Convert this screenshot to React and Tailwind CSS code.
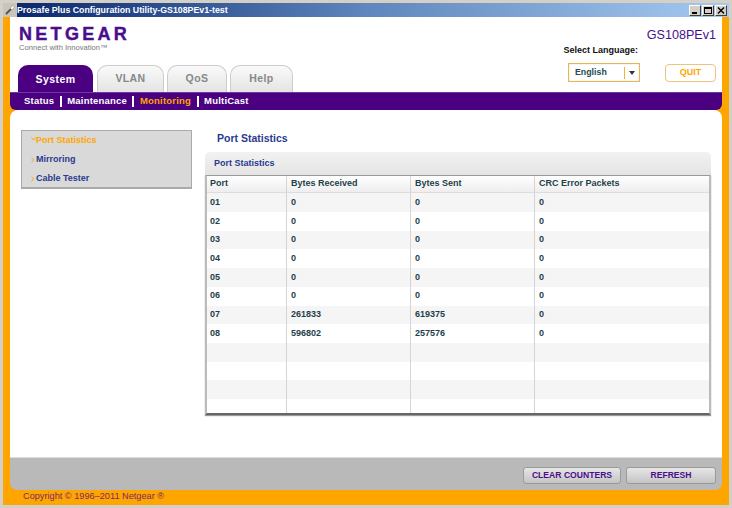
import React from "react";

const tabs = [
  { label: "VLAN", width: "w-[67px]" },
  { label: "QoS", width: "w-[60px]" },
  { label: "Help", width: "w-[63px]" },
];

const rows = [
  ["01", "0", "0", "0"],
  ["02", "0", "0", "0"],
  ["03", "0", "0", "0"],
  ["04", "0", "0", "0"],
  ["05", "0", "0", "0"],
  ["06", "0", "0", "0"],
  ["07", "261833", "619375", "0"],
  ["08", "596802", "257576", "0"],
  ["", "", "", ""],
  ["", "", "", ""],
  ["", "", "", ""],
];

const WinButton = ({ children }) => (
  <div className="w-[12px] h-[11px] flex items-center justify-center bg-[#d4d0c8] border border-t-white border-l-white border-r-[#404040] border-b-[#404040]">
    {children}
  </div>
);

const Chevron = () => (
  <svg width="4" height="6" viewBox="0 0 4 6" className="mr-[1px] shrink-0">
    <path d="M0.5 0.8 L2.8 3 L0.5 5.2" fill="none" stroke="#ffa500" strokeWidth="1" />
  </svg>
);

const TitleBar = () => (
  <div className="h-[14px] flex items-center bg-gradient-to-r from-[#0a246a] via-[#5f86bd] to-[#a6caf0] pr-[2px]">
    <div className="w-[14px] h-[14px] bg-[#c9c5bc] flex items-center justify-center">
      <svg width="12" height="12" viewBox="0 0 12 12">
        <path d="M2 10 L7 5" stroke="#555" strokeWidth="2" />
        <path d="M6 4 L9 1.5 L10.5 3 L8 6 Z" fill="#fff" stroke="#777" strokeWidth="0.5" />
      </svg>
    </div>
    <span className="text-[8.8px] font-bold text-white leading-none">
      Prosafe Plus Configuration Utility-GS108PEv1-test
    </span>
    <div className="ml-auto flex gap-[1px]">
      <WinButton>
        <div className="w-[5px] h-[2px] bg-black mt-[5px] mr-[2px]" />
      </WinButton>
      <WinButton>
        <div className="w-[8px] h-[7px] border border-black border-t-2" />
      </WinButton>
      <WinButton>
        <svg width="8" height="7" viewBox="0 0 8 7">
          <path d="M1 0.5 L7 6.5 M7 0.5 L1 6.5" stroke="#000" strokeWidth="1.4" />
        </svg>
      </WinButton>
    </div>
  </div>
);

const Header = () => (
  <div className="h-[75px] bg-white flex justify-between">
    <div className="flex flex-col pl-[8px]">
      <div className="mt-[7px] ml-[1px] text-[#4a0e8c] text-[18px] leading-[20px] font-bold tracking-[3.3px] [-webkit-text-stroke:0.4px_#4a0e8c]">
        NETGEAR
      </div>
      <div className="ml-[1px] text-[7.6px] leading-[8px] text-[#777]">Connect with Innovation™</div>
      <div className="flex mt-[13px] h-[27px] items-end">
        <div className="w-[75px] h-[27px] pt-[3px] rounded-t-[10px] bg-[#4b0082] text-white text-[10.5px] font-bold tracking-[0.4px] flex items-center justify-center">
          System
        </div>
        <div className="flex gap-[3px] ml-[4px]">
          {tabs.map((tab) => (
            <div
              key={tab.label}
              className={`${tab.width} h-[27px] rounded-t-[10px] border border-b-0 border-[#ccc] bg-gradient-to-b from-[#fafafa] to-[#e4e4e4] text-[#888] text-[10.5px] font-bold tracking-[0.4px] flex items-center justify-center`}
            >
              {tab.label}
            </div>
          ))}
        </div>
      </div>
    </div>
    <div className="flex flex-col items-end pr-[6px]">
      <div className="mt-[11px] text-[12.6px] leading-[15px] text-[#4a0e8c]">GS108PEv1</div>
      <div className="mt-[1px] mr-[78px] text-[9px] leading-[12px] font-bold text-[#111]">
        Select Language:
      </div>
      <div className="flex mt-[7px] items-center">
        <div className="w-[72px] h-[19px] border border-[#e8b65a] flex items-center shadow-[inset_0_0_1px_#c9a15a]">
          <span className="ml-[6px] text-[8.8px] font-bold text-[#234a55]">English</span>
          <div className="ml-auto w-[15px] h-[12px] border-l border-[#f5b03e] flex items-center justify-center">
            <div className="w-0 h-0 border-x-[3px] border-x-transparent border-t-[4px] border-t-[#333]" />
          </div>
        </div>
        <div className="ml-[25px] w-[51px] h-[18px] rounded-[4px] border border-[#edc47e] bg-white text-[#ffa500] text-[9px] font-bold flex items-center justify-center">
          QUIT
        </div>
      </div>
    </div>
  </div>
);

const SubNav = () => (
  <div className="h-[18px] bg-[#4b0082] rounded-b-[6px] border-t border-[#6a3a9f] flex items-center pl-[14px] text-[9.5px] font-bold tracking-[0.2px] text-white">
    <span>Status</span>
    <span className="w-[2px] h-[11px] bg-white mx-[5.5px]" />
    <span>Maintenance</span>
    <span className="w-[2px] h-[11px] bg-white mx-[5.5px]" />
    <span className="text-[#ffa500]">Monitoring</span>
    <span className="w-[2px] h-[11px] bg-white mx-[5.5px]" />
    <span>MultiCast</span>
  </div>
);

const SideMenu = () => (
  <div className="w-[171px] h-[59px] bg-[#d9d9d9] border border-[#aaa] border-b-2 flex flex-col text-[9px] font-bold text-[#2a3a8f]">
    <div className="h-[19px] shrink-0 flex items-center pl-[9px] text-[#ffa500]">
      <svg width="5" height="4" viewBox="0 0 5 4" className="-mt-[4px] shrink-0">
        <path d="M0.5 0.5 L2.5 3 L4.5 0.5" fill="none" stroke="#ffa500" strokeWidth="1" />
      </svg>
      <span>Port Statistics</span>
    </div>
    <div className="h-[19px] shrink-0 flex items-center pl-[9px]">
      <Chevron />
      <span>Mirroring</span>
    </div>
    <div className="h-[19px] shrink-0 flex items-center pl-[9px]">
      <Chevron />
      <span>Cable Tester</span>
    </div>
  </div>
);

const StatsTable = () => (
  <div className="w-[506px]">
    <div className="h-[23px] pl-[9px] flex items-center bg-gradient-to-b from-[#f2f2f2] to-[#e4e4e4] rounded-t-[5px] text-[9px] font-bold text-[#2a3a8f]">
      Port Statistics
    </div>
    <div className="border-l-2 border-r-2 border-[#bbb] border-t border-t-[#999] border-b-2 border-b-[#666] shadow-[0_1px_1px_#999]">
      <div className="grid grid-cols-[80px_124px_124px_1fr] h-[17.4px] items-stretch bg-gradient-to-b from-white to-[#eee] border-b border-[#ddd] text-[9px] font-bold text-[#1f3f4a]">
        <div className="pl-[3px] flex items-center border-r border-[#d5d5d5]">Port</div>
        <div className="pl-[4px] flex items-center border-r border-[#d5d5d5]">Bytes Received</div>
        <div className="pl-[4px] flex items-center border-r border-[#d5d5d5]">Bytes Sent</div>
        <div className="pl-[4px] flex items-center">CRC Error Packets</div>
      </div>
      {rows.map((row, i) => (
        <div
          key={i}
          className={`grid grid-cols-[80px_124px_124px_1fr] h-[18.7px] text-[9px] font-bold text-[#1f3f4a] ${
            i % 2 === 0 ? "bg-[#f5f5f5]" : "bg-white"
          }`}
        >
          {row.map((cell, j) => (
            <div
              key={j}
              className={`${j === 0 ? "pl-[3px]" : "pl-[4px]"} flex items-center ${j < 3 ? "border-r border-[#d5d5d5]" : ""}`}
            >
              {cell}
            </div>
          ))}
        </div>
      ))}
      <div className="grid grid-cols-[80px_124px_124px_1fr] h-[13.6px] bg-white">
        <div className="border-r border-[#d5d5d5]" />
        <div className="border-r border-[#d5d5d5]" />
        <div className="border-r border-[#d5d5d5]" />
        <div />
      </div>
    </div>
  </div>
);

const App = () => {
  return (
    <div className="w-[732px] h-[508px] overflow-hidden bg-[#d4d0c8] p-[3px] flex flex-col font-['Liberation_Sans',Arial,sans-serif]">
      <TitleBar />
      <div className="flex-1 bg-[#ffa500] px-[7px] flex flex-col">
        <Header />
        <SubNav />
        <div className="h-[347px] bg-white rounded-t-[8px] flex pl-[11px] pt-[20px] gap-[13px]">
          <SideMenu />
          <div className="flex flex-col">
            <div className="h-[22px] pt-[1px] pl-[12px] text-[10.5px] leading-[14px] font-bold text-[#2a3a8f]">
              Port Statistics
            </div>
            <StatsTable />
          </div>
        </div>
        <div className="h-[33px] pt-[3px] bg-[#b9b9b9] border-t border-[#ddd] rounded-b-[7px] flex justify-end items-center gap-[5px] pr-[6px]">
          <div className="w-[98px] h-[17px] rounded-[3px] border border-[#999] bg-gradient-to-b from-[#e6e6e6] to-[#c4c4c4] text-[8.6px] font-bold text-[#4a0e8c] flex items-center justify-center">
            CLEAR COUNTERS
          </div>
          <div className="w-[90px] h-[17px] rounded-[3px] border border-[#999] bg-gradient-to-b from-[#e6e6e6] to-[#c4c4c4] text-[8.6px] font-bold text-[#4a0e8c] flex items-center justify-center">
            REFRESH
          </div>
        </div>
        <div className="h-[15px] pl-[13px] text-[9.2px] leading-[13px] text-[#7a2a6a]">
          Copyright © 1996–2011 Netgear ®
        </div>
      </div>
    </div>
  );
};

export default App;
